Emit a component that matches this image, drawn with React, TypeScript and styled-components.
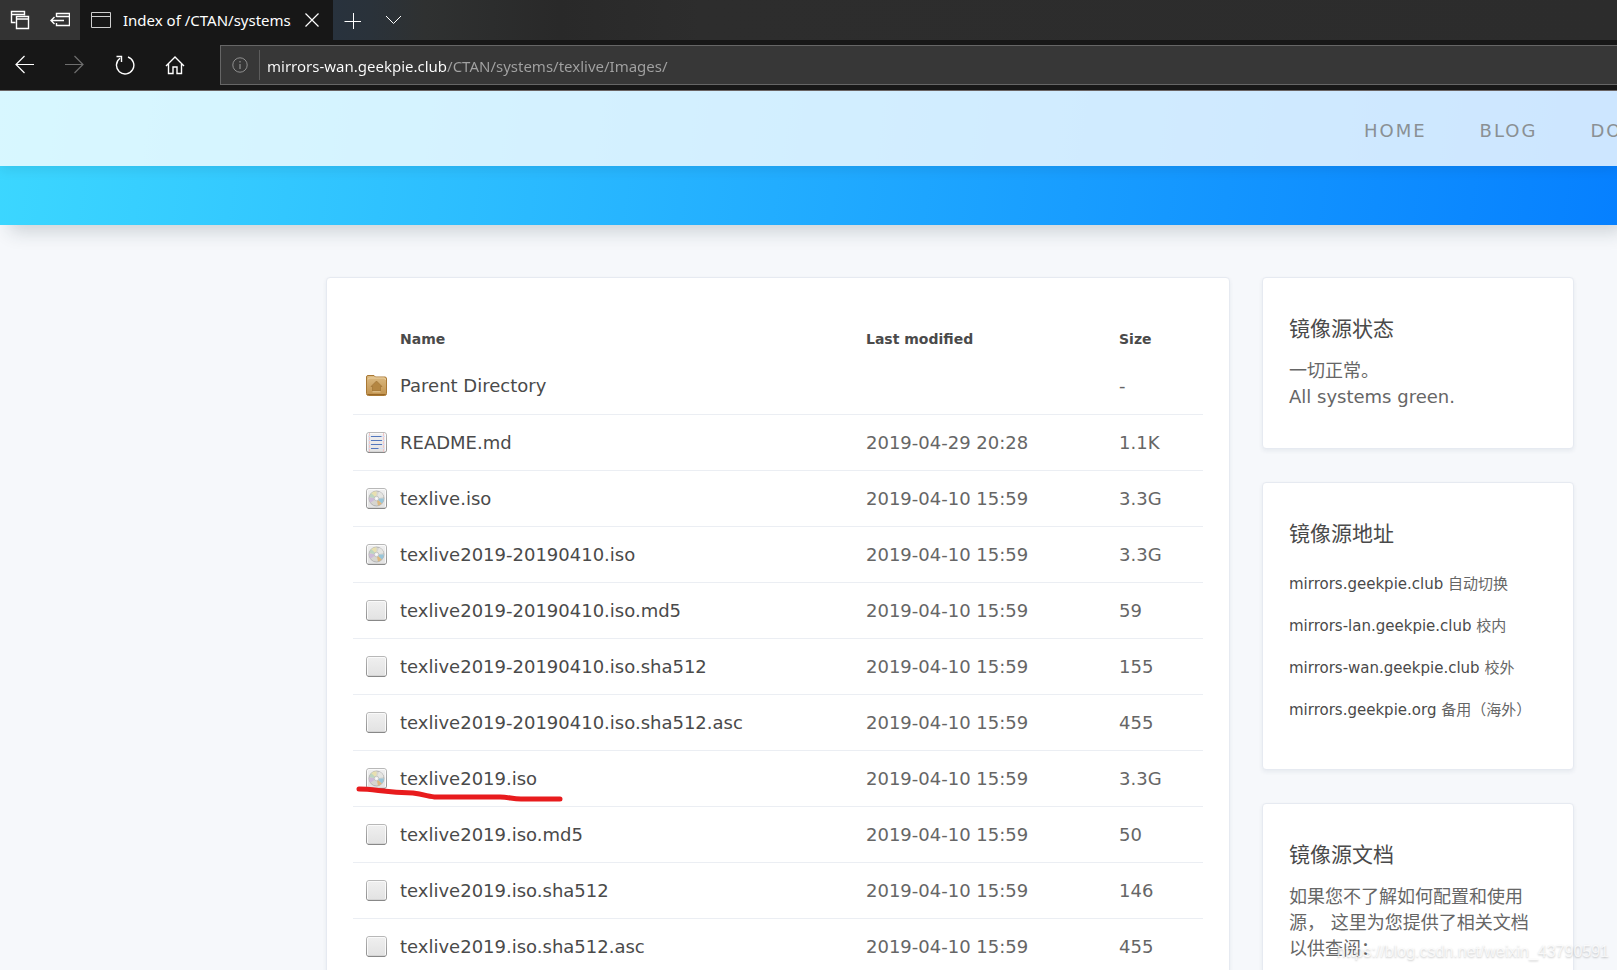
import React from "react";
import styled, { createGlobalStyle } from "styled-components";

const GlobalStyle = createGlobalStyle`
  *, *::before, *::after { box-sizing: border-box; }
  html, body, #root { height: 100%; }
  body { margin: 0; background: #f6f8fb; overflow: hidden; }
  h2, p, ul { margin: 0; padding: 0; }
  button { border: 0; padding: 0; background: none; font: inherit; color: inherit; cursor: pointer; }
  a { color: inherit; text-decoration: none; }
`;

const pageFont = `"DejaVu Sans", "Noto Sans CJK SC", sans-serif`;
const chromeFont = `"Noto Sans", "Noto Sans CJK SC", sans-serif`;

/* Browser window */

const Window = styled.div`
  position: relative;
  display: flex;
  flex-direction: column;
  height: 100%;
  overflow: hidden;
`;

const TabStrip = styled.div`
  display: flex;
  flex: none;
  height: 40px;
  color: #fff;
  font-family: ${chromeFont};
  background: linear-gradient(90deg, #333 0, #333 80px, #28323d 333px, #2a323a 370px, #2f3131 425px, #292929 560px, #2d2d2d 700px, #2c2c2c 100%);
`;

const StripButton = styled.button`
  display: grid;
  place-items: center;
  width: 40px;
  height: 40px;
`;

const Tab = styled.div`
  display: flex;
  align-items: center;
  gap: 12px;
  width: 253px;
  padding: 0 12px 0 11px;
  background: #171717;
  svg { flex: none; }
`;

const TabTitle = styled.span`
  flex: 1;
  overflow: hidden;
  white-space: nowrap;
  font-size: 15px;
  line-height: 24px;
`;

const CloseButton = styled.button`
  display: grid;
  place-items: center;
  width: 18px;
  height: 24px;
`;

const Toolbar = styled.div`
  display: flex;
  flex: none;
  align-items: center;
  height: 51px;
  background: #171717;
  border-bottom: 1px solid #6a6464;
  color: #fff;
`;

const ToolButton = styled.button`
  display: grid;
  place-items: center;
  width: 50px;
  height: 50px;
  &:disabled { color: #6e6e6e; }
`;

const AddressBar = styled.label`
  display: flex;
  flex: 1;
  align-items: center;
  height: 40px;
  margin-left: 20px;
  background: #373737;
  border: 1px solid #666;
  border-right: 0;
  font-family: ${chromeFont};
`;

const SiteInfo = styled.span`
  display: grid;
  place-items: center;
  width: 39px;
  height: 30px;
  border-right: 1px solid #5c5c5c;
`;

const AddressInput = styled.input`
  flex: 1;
  min-width: 0;
  height: 32px;
  padding: 2px 0 0 7px;
  border: 0;
  outline: 0;
  font-family: inherit;
  font-size: 15px;
  line-height: 30px;
  color: transparent;
  background: linear-gradient(90deg, #fff 187px, #a2a2a2 187px);
  background-clip: text;
  -webkit-background-clip: text;
`;

/* Site */

const Site = styled.div`
  flex: 1;
  min-height: 0;
  overflow: hidden;
  font-family: ${pageFont};
  background: #f6f8fb;
`;

const Hero = styled.div`
  height: 134px;
  background: linear-gradient(98deg, #3cd7ff, #0680ff);
  box-shadow: 8px 8px 18px -2px rgba(30, 50, 60, 0.2);
`;

const SiteHeader = styled.header`
  display: flex;
  align-items: center;
  justify-content: flex-end;
  height: 75px;
  padding-top: 5px;
  background: rgba(255, 255, 255, 0.8);
  box-shadow: 0 4px 12px rgba(0, 0, 0, 0.08);
`;

const SiteNav = styled.nav`
  display: flex;
  flex: none;
  width: 253px;
  gap: 53px;
`;

const NavLink = styled.a`
  font-size: 18px;
  line-height: 24px;
  letter-spacing: 2px;
  text-transform: uppercase;
  color: #8a9094;
`;

const Content = styled.div`
  display: flex;
  gap: 32px;
  padding: 52px 43px 32px 326px;
`;

const Card = styled.section`
  background: #fff;
  border: 1px solid #e6eaf1;
  border-radius: 4px;
  box-shadow: 0 2px 4px rgba(30, 50, 90, 0.07);
`;

const Listing = styled(Card)`
  flex: 1;
  min-width: 0;
  padding: 41px 26px;
`;

const FileTable = styled.table`
  width: 100%;
  border-collapse: collapse;
  table-layout: fixed;
  font-size: 18px;
  color: #666;
  text-align: left;
`;

const HeadCell = styled.th<{ $width?: number }>`
  width: ${(p) => (p.$width ? `${p.$width}px` : "auto")};
  height: 39px;
  padding: 0;
  font-size: 14px;
  color: #4a4a4a;
`;

const Row = styled.tr`
  height: 56px;
  border-bottom: 1px solid #ebeef3;
`;

const Cell = styled.td`
  padding: 0;
  white-space: nowrap;
`;

const IconCell = styled(Cell)`
  padding-left: 13px;
  svg { display: block; }
`;

const FileLink = styled.a`
  position: relative;
  color: #4a4a4a;
`;

const Marker = styled.svg`
  position: absolute;
  left: -46px;
  top: 17px;
  pointer-events: none;
`;

const Sidebar = styled.aside`
  display: flex;
  flex: 0 0 312px;
  flex-direction: column;
  gap: 33px;
`;

const Panel = styled(Card)`
  padding: 38px 32px 38px 26px;
  color: #666;
`;

const PanelTitle = styled.h2`
  margin-bottom: 16px;
  font-size: 21px;
  line-height: 26px;
  font-weight: 400;
  color: #4a4a4a;
`;

const PanelText = styled.p`
  font-size: 18px;
  line-height: 26px;
`;

const MirrorList = styled.ul`
  list-style: none;
  font-size: 15px;
  line-height: 42px;
  white-space: nowrap;
  a { color: #4a4a4a; }
`;

const Watermark = styled.div`
  position: absolute;
  right: 8px;
  bottom: 8px;
  font: 16px/20px "Liberation Sans", Arial, sans-serif;
  color: rgba(255, 255, 255, 0.75);
  text-shadow: 0 1px 2px rgba(0, 0, 0, 0.22);
  pointer-events: none;
`;

type FileKind = "parent" | "text" | "disc" | "blank";

function FileIcon({ kind }: { kind: FileKind }) {
  if (kind === "parent") {
    return (
      <svg width="21" height="21" viewBox="0 0 21 21" aria-hidden="true">
        <path d="M0.5 2 Q0.5 0.5 2 0.5 H8 L9.5 2 H19 Q20.5 2 20.5 4 V18.5 Q20.5 20.5 18.5 20.5 H2.5 Q0.5 20.5 0.5 18.5Z" fill="url(#folder)" stroke="#a97834" />
        <path d="M2 4.5 Q2 3 4 3 H18 Q19.5 3 19.5 5" fill="none" stroke="#ecd2a4" />
        <path d="M1.5 19.5 H19.5" stroke="#986827" />
        <path d="M10.5 6 L16 11.5 H14.5 V16 H6.5 V11.5 H5Z" fill="#b48642" stroke="#9c7033" strokeWidth=".6" />
        <path d="M6.5 16.8 H14.5" stroke="#e8cc9a" />
      </svg>
    );
  }
  return (
    <svg width="21" height="21" viewBox="0 0 21 21" aria-hidden="true">
      <rect x=".5" y=".5" width="20" height="20" rx="2.5" fill="url(#sheet)" stroke="url(#sheetEdge)" />
      <rect x="1.5" y="1.5" width="18" height="18" rx="1.5" fill="none" stroke="#fafafa" />
      <path d="M2 20.2 H19" stroke="#868686" />
      {kind === "text" && (
        <>
          <path d="M3.5 1 V20 M17.5 1 V20" stroke="#f0c4c6" />
          <path d="M2 4.5 H19 M2 8.5 H19 M2 12.5 H19 M2 16.5 H19" stroke="#d7e0f2" />
          <path d="M5 4.5 H15.5 M5 8.5 H16 M5 12.5 H16 M5 16.5 H12.5" stroke="#5277bd" />
        </>
      )}
      {kind === "disc" && (
        <>
          <circle cx="10.5" cy="10.5" r="7.5" fill="#d6d5d0" stroke="#a9a9a9" strokeWidth=".8" />
          <path d="M10.5 10.5 L5 5.5 A7.3 7.3 0 0 1 10.5 3.2Z" fill="#e8e0b0" />
          <path d="M10.5 10.5 L3.4 9 A7.3 7.3 0 0 1 5.5 5.3Z" fill="#bcd6c0" />
          <path d="M10.5 10.5 L4.5 14.7 A7.3 7.3 0 0 1 3.3 9.5Z" fill="#cdbbd9" />
          <path d="M10.5 10.5 L17.8 10.5 A7.3 7.3 0 0 1 15.8 15.6Z" fill="#98c6da" />
          <path d="M10.5 10.5 L15.8 15.6 A7.3 7.3 0 0 1 12 17.6Z" fill="#dcb981" />
          <path d="M10.5 10.5 L13 3.7 A7.3 7.3 0 0 1 17.6 9Z" fill="#e5e5e2" />
          <circle cx="10.5" cy="10.5" r="2.3" fill="#eee" stroke="#b9b9b9" strokeWidth=".7" />
          <circle cx="10.5" cy="10.5" r=".8" fill="#fff" />
        </>
      )}
    </svg>
  );
}

const line = { fill: "none", stroke: "currentColor", "aria-hidden": true } as const;

const files: { kind: FileKind; name: string; modified: string; size: string; marked?: boolean }[] = [
  { kind: "parent", name: "Parent Directory", modified: "", size: "-" },
  { kind: "text", name: "README.md", modified: "2019-04-29 20:28", size: "1.1K" },
  { kind: "disc", name: "texlive.iso", modified: "2019-04-10 15:59", size: "3.3G" },
  { kind: "disc", name: "texlive2019-20190410.iso", modified: "2019-04-10 15:59", size: "3.3G" },
  { kind: "blank", name: "texlive2019-20190410.iso.md5", modified: "2019-04-10 15:59", size: "59" },
  { kind: "blank", name: "texlive2019-20190410.iso.sha512", modified: "2019-04-10 15:59", size: "155" },
  { kind: "blank", name: "texlive2019-20190410.iso.sha512.asc", modified: "2019-04-10 15:59", size: "455" },
  { kind: "disc", name: "texlive2019.iso", modified: "2019-04-10 15:59", size: "3.3G", marked: true },
  { kind: "blank", name: "texlive2019.iso.md5", modified: "2019-04-10 15:59", size: "50" },
  { kind: "blank", name: "texlive2019.iso.sha512", modified: "2019-04-10 15:59", size: "146" },
  { kind: "blank", name: "texlive2019.iso.sha512.asc", modified: "2019-04-10 15:59", size: "455" },
];

const mirrors = [
  ["mirrors.geekpie.club", "自动切换"],
  ["mirrors-lan.geekpie.club", "校内"],
  ["mirrors-wan.geekpie.club", "校外"],
  ["mirrors.geekpie.org", "备用（海外）"],
];

function BrowserChrome() {
  return (
    <>
      <TabStrip>
        <StripButton aria-label="Tabs you've set aside">
          <svg width="20" height="20" {...line}>
            <path d="M5.5 12.5 H1.5 V1.5 H14.5 V5.5 M1.5 4.5 H14.5" strokeWidth="1.4" />
            <path d="M6.5 6.5 H18.5 V18.5 H6.5Z M6.5 9 H18.5" strokeWidth="1.4" />
          </svg>
        </StripButton>
        <StripButton aria-label="Set these tabs aside">
          <svg width="20" height="20" {...line}>
            <path d="M6.5 7 V3.5 H19.5 V15.5 H6.5 V13 M6.5 6.5 H19.5" strokeWidth="1.4" />
            <path d="M14 10.5 H1 M4.5 7 L1 10.5 L4.5 14" strokeWidth="1.4" />
          </svg>
        </StripButton>
        <Tab>
          <svg width="20" height="18" {...line}>
            <path d="M.5 1.5 H19.5 V16.5 H.5Z M.5 5.5 H19.5" stroke="#cfcfcf" />
          </svg>
          <TabTitle>Index of /CTAN/systems/texlive/Images</TabTitle>
          <CloseButton aria-label="Close tab">
            <svg width="14" height="14" {...line}>
              <path d="M.5 .5 L13.5 13.5 M13.5 .5 L.5 13.5" strokeWidth="1.2" />
            </svg>
          </CloseButton>
        </Tab>
        <StripButton aria-label="New tab">
          <svg width="18" height="18" {...line}>
            <path d="M.5 10.5 H17 M9.5 2 V18" />
          </svg>
        </StripButton>
        <StripButton aria-label="Show tab previews">
          <svg width="17" height="10" {...line}>
            <path d="M1 1 L8.5 8.5 L16 1" />
          </svg>
        </StripButton>
      </TabStrip>
      <Toolbar>
        <ToolButton aria-label="Back">
          <svg width="20" height="20" {...line}>
            <path d="M19 9.5 H1 M9.5 1 L1 9.5 L9.5 18" strokeWidth="1.2" />
          </svg>
        </ToolButton>
        <ToolButton aria-label="Forward" disabled>
          <svg width="20" height="20" {...line}>
            <path d="M0 9.5 H18 M9.5 1 L18 9.5 L9.5 18" strokeWidth="1.2" />
          </svg>
        </ToolButton>
        <ToolButton aria-label="Refresh">
          <svg width="20" height="20" {...line}>
            <path d="M13 2 A8.7 8.7 0 1 1 5 3.2 M1.5 1.5 H6.5 V7" strokeWidth="1.4" />
          </svg>
        </ToolButton>
        <ToolButton aria-label="Home">
          <svg width="20" height="20" {...line}>
            <path d="M1 11 L10 2 L19 11 M3.5 9 V18.5 H8 V12 H12 V18.5 H16.5 V9" strokeWidth="1.4" />
          </svg>
        </ToolButton>
        <AddressBar>
          <SiteInfo>
            <svg width="16" height="16" {...line}>
              <circle cx="8" cy="8" r="7.2" stroke="#8f8f8f" />
              <path d="M8 7 V12 M8 4 V5.5" stroke="#8f8f8f" strokeWidth="1.2" />
            </svg>
          </SiteInfo>
          <AddressInput aria-label="Address" defaultValue="mirrors-wan.geekpie.club/CTAN/systems/texlive/Images/" />
        </AddressBar>
      </Toolbar>
    </>
  );
}

const Gradients = styled.svg`
  position: absolute;
`;

export default function App() {
  return (
    <Window>
      <GlobalStyle />
      <Gradients width="0" height="0" aria-hidden="true">
        <defs>
          <linearGradient id="folder" x1="0" y1="0" x2="0" y2="1">
            <stop offset="0" stopColor="#dcbb83" />
            <stop offset="1" stopColor="#c1924d" />
          </linearGradient>
          <linearGradient id="sheet" x1="0" y1="0" x2="0" y2="1">
            <stop offset="0" stopColor="#f0f0f0" />
            <stop offset="1" stopColor="#e2e2e2" />
          </linearGradient>
          <linearGradient id="sheetEdge" x1="0" y1="0" x2="0" y2="1">
            <stop offset="0" stopColor="#b8b8b8" />
            <stop offset="1" stopColor="#8e8e8e" />
          </linearGradient>
        </defs>
      </Gradients>
      <BrowserChrome />
      <Site>
        <Hero>
          <SiteHeader>
            <SiteNav>
              <NavLink href="#home">Home</NavLink>
              <NavLink href="#blog">Blog</NavLink>
              <NavLink href="#docs">Docs</NavLink>
            </SiteNav>
          </SiteHeader>
        </Hero>
        <Content>
          <Listing>
            <FileTable>
              <thead>
                <tr>
                  <HeadCell $width={47} aria-label="Type" />
                  <HeadCell scope="col">Name</HeadCell>
                  <HeadCell scope="col" $width={253}>Last modified</HeadCell>
                  <HeadCell scope="col" $width={84}>Size</HeadCell>
                </tr>
              </thead>
              <tbody>
                {files.map((file) => (
                  <Row key={file.name}>
                    <IconCell><FileIcon kind={file.kind} /></IconCell>
                    <Cell>
                      <FileLink href="#file">
                        {file.name}
                        {file.marked && (
                          <Marker width="212" height="18" fill="none" aria-hidden="true">
                            <path d="M5 4 C20 4 29 7 59 8 C72 10 77 12 82 12 H146 C155 12 158 14 167 14 H206" stroke="#e81b1d" strokeWidth="5" strokeLinecap="round" />
                          </Marker>
                        )}
                      </FileLink>
                    </Cell>
                    <Cell>{file.modified}</Cell>
                    <Cell>{file.size}</Cell>
                  </Row>
                ))}
              </tbody>
            </FileTable>
          </Listing>
          <Sidebar>
            <Panel>
              <PanelTitle>镜像源状态</PanelTitle>
              <PanelText>一切正常。<br />All systems green.</PanelText>
            </Panel>
            <Panel>
              <PanelTitle>镜像源地址</PanelTitle>
              <MirrorList>
                {mirrors.map(([host, note]) => (
                  <li key={host}><a href="#mirror">{host}</a> {note}</li>
                ))}
              </MirrorList>
            </Panel>
            <Panel>
              <PanelTitle>镜像源文档</PanelTitle>
              <PanelText>如果您不了解如何配置和使用源， 这里为您提供了相关文档以供查阅：</PanelText>
            </Panel>
          </Sidebar>
        </Content>
      </Site>
      <Watermark>https://blog.csdn.net/weixin_43790591</Watermark>
    </Window>
  );
}
